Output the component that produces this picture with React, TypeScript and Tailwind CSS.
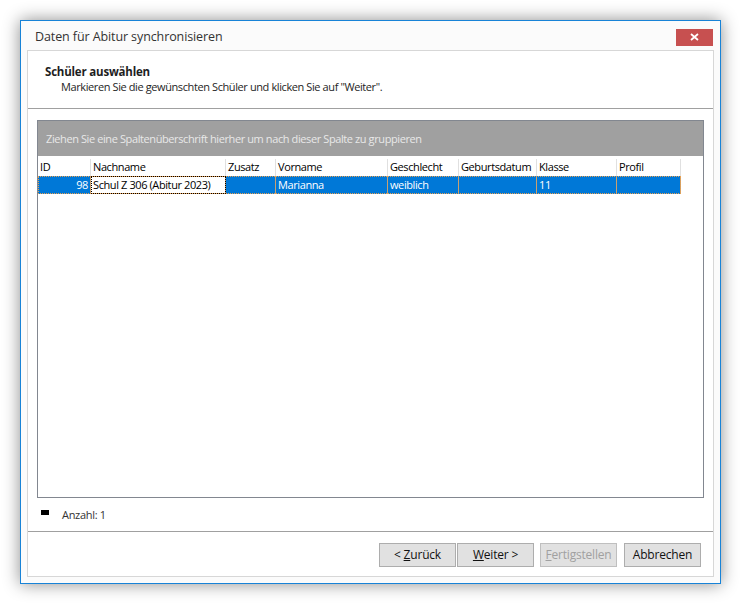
const cols = [
  { key: "id", label: "ID", w: 53 },
  { key: "nachname", label: "Nachname", w: 135 },
  { key: "zusatz", label: "Zusatz", w: 50 },
  { key: "vorname", label: "Vorname", w: 112 },
  { key: "geschlecht", label: "Geschlecht", w: 71 },
  { key: "geburtsdatum", label: "Geburtsdatum", w: 78 },
  { key: "klasse", label: "Klasse", w: 80 },
  { key: "profil", label: "Profil", w: 64 },
];

const row: Record<string, string> = {
  id: "98",
  nachname: "Schul Z 306 (Abitur 2023)",
  zusatz: "",
  vorname: "Marianna",
  geschlecht: "weiblich",
  geburtsdatum: "",
  klasse: "11",
  profil: "",
};

function Button({ children, disabled }: { children: React.ReactNode; disabled?: boolean }) {
  return (
    <button
      className={
        "w-[77px] h-[24px] border bg-[#e1e1e1] text-[12px] leading-none tracking-[-0.2px] " +
        (disabled ? "border-[#bfbfbf] text-[#a0a0a0]" : "border-[#adadad] text-[#111]")
      }
    >
      {children}
    </button>
  );
}

export default function App() {
  return (
    <div className="w-[741px] h-[604px] bg-white pt-[20px] pl-[20px] font-['Open_Sans',sans-serif] text-[#1e1e1e]">
      <div className="w-[701px] h-[564px] border border-[#1883d7] bg-[#fbfbfb] shadow-[0_0_16px_rgba(0,0,0,0.45)] flex flex-col">
        <div className="h-[29px] flex items-center justify-between pl-[14px] pr-[7px] pt-[4px]">
          <span className="text-[12.5px] text-[#333] tracking-[-0.1px]">Daten für Abitur synchronisieren</span>
          <div className="w-[37px] h-[17px] bg-[#c75050] flex items-center justify-center -mt-[1px]">
            <svg width="9" height="8" viewBox="0 0 9 8">
              <path d="M1 1 L8 7 M8 1 L1 7" stroke="white" strokeWidth="1.8" />
            </svg>
          </div>
        </div>
        <div className="mx-[6px] mb-[6px] flex-1 border border-[#d7d7d7] bg-white flex flex-col">
          <div className="h-[58px] pl-[17px] pt-[13px] border-b border-[#a0a0a0]">
            <div className="text-[11.5px] font-bold leading-[15px] tracking-[-0.2px]">Schüler auswählen</div>
            <div className="text-[11px] leading-[16px] pl-[16px] tracking-[-0.4px]">
              Markieren Sie die gewünschten Schüler und klicken Sie auf "Weiter".
            </div>
          </div>
          <div className="pt-[11px] px-[9px]">
            <div className="h-[378px] border border-[#828790] bg-white flex flex-col">
              <div className="h-[35px] shrink-0 bg-[#a0a0a0] flex items-center pl-[8px] pt-[2px] text-[11px] text-[#e8e8e8] tracking-[-0.4px]">
                Ziehen Sie eine Spaltenüberschrift hierher um nach dieser Spalte zu gruppieren
              </div>
              <div className="flex h-[20px] shrink-0 text-[11px] tracking-[-0.4px] pt-[3px]">
                {cols.map((c) => (
                  <div
                    key={c.key}
                    style={{ width: c.w }}
                    className="border-r border-[#e0e0e0] pl-[2px] flex items-center text-black"
                  >
                    {c.label}
                  </div>
                ))}
              </div>
              <div className="flex h-[18px] shrink-0 w-[643px] text-[11px] tracking-[-0.4px] outline-1 outline-dotted outline-[#e8a050] -outline-offset-1">
                {cols.map((c) => {
                  const focus = c.key === "nachname";
                  return (
                    <div
                      key={c.key}
                      style={{ width: c.w }}
                      className={
                        "flex items-center px-[2px] pt-[1px] border-r border-[#c8a070] " +
                        (focus
                          ? "bg-white text-black outline-1 outline-dotted outline-black -outline-offset-1"
                          : "bg-[#0078d7] text-white") +
                        (c.key === "id" ? " justify-end" : "")
                      }
                    >
                      {row[c.key]}
                    </div>
                  );
                })}
              </div>
            </div>
            <div className="h-[33px] flex items-start pt-[10px] pl-[4px]">
              <div className="w-[8px] h-[5px] bg-black mt-[2px]" />
              <span className="ml-[13px] text-[11px] leading-[14px] text-[#333] tracking-[-0.3px]">Anzahl: 1</span>
            </div>
          </div>
          <div className="border-t border-[#a0a0a0] flex-1 flex items-start pt-[11px] pl-[351px] gap-0">
            <Button>
              &lt; <u>Z</u>urück
            </Button>
            <div className="w-[1px] shrink-0" />
            <Button>
              <u>W</u>eiter &gt;
            </Button>
            <div className="w-[6px] shrink-0" />
            <Button disabled>
              <u>F</u>ertigstellen
            </Button>
            <div className="w-[7px] shrink-0" />
            <Button>Abbrechen</Button>
          </div>
        </div>
      </div>
    </div>
  );
}
